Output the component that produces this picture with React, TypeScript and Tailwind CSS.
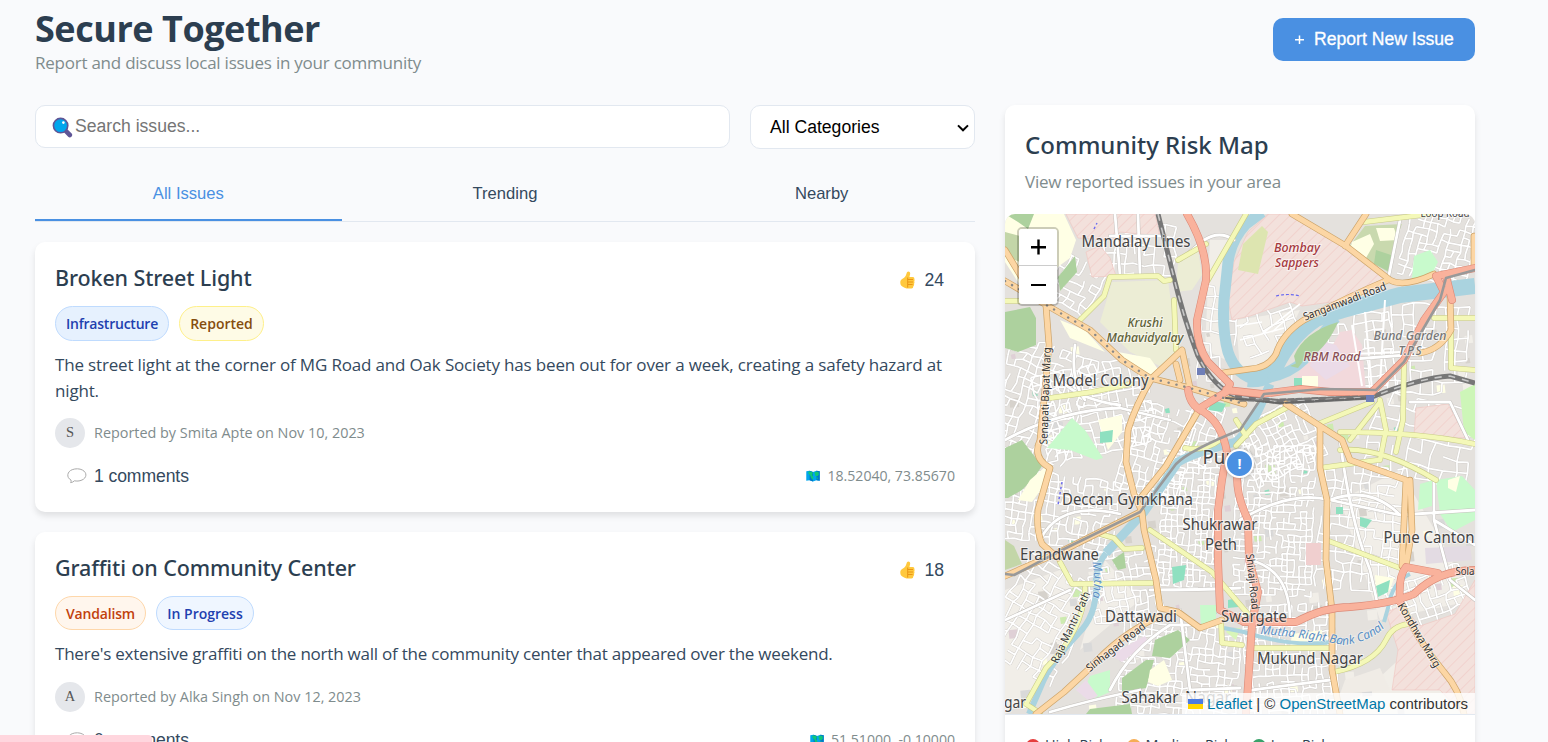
import type { ReactNode } from 'react';

type Badge = { label: string; className: string };
type Issue = {
  title: string;
  votes: number;
  badges: Badge[];
  text: string;
  textClass: string;
  initial: string;
  reporter: string;
  comments: number;
  coords: string;
};

const issues: Issue[] = [
  {
    title: 'Broken Street Light',
    votes: 24,
    badges: [
      { label: 'Infrastructure', className: 'h-[35px] w-[114px] tracking-[-0.22px] bg-[#e6f1fe] border-[#bfdbfe] text-[#1e40af]' },
      { label: 'Reported', className: 'h-[35px] w-[85px] bg-[#fefbe6] border-[#fef08a] text-[#854d0e]' },
    ],
    text: 'The street light at the corner of MG Road and Oak Society has been out for over a week, creating a safety hazard at night.',
    textClass: 'leading-[26px] tracking-[-0.168px]',
    initial: 'S',
    reporter: 'Reported by Smita Apte on Nov 10, 2023',
    comments: 1,
    coords: '18.52040, 73.85670',
  },
  {
    title: 'Graffiti on Community Center',
    votes: 18,
    badges: [
      { label: 'Vandalism', className: 'h-[34px] w-[91px] tracking-[-0.18px] bg-[#fff6ed] border-[#fed7aa] text-[#c2410c]' },
      { label: 'In Progress', className: 'h-[34px] w-[98px] bg-[#eff6ff] border-[#bfdbfe] text-[#1e40af]' },
    ],
    text: "There's extensive graffiti on the north wall of the community center that appeared over the weekend.",
    textClass: 'pb-[2px] leading-[24px] tracking-[-0.225px]',
    initial: 'A',
    reporter: 'Reported by Alka Singh on Nov 12, 2023',
    comments: 0,
    coords: '51.51000, -0.10000',
  },
];

function SearchIcon() {
  return (
    <svg width="21" height="21" viewBox="0 0 21 21" className="shrink-0">
      <path d="M14 14.2 L17.8 18" stroke="#5f5596" strokeWidth="4.6" strokeLinecap="round" />
      <circle cx="8.6" cy="8.6" r="7.2" fill="#00a6ed" stroke="#5f5596" strokeWidth="1.6" />
      <circle cx="11.4" cy="5.6" r="1.3" fill="#fff" />
    </svg>
  );
}

function ThumbIcon() {
  return (
    <svg width="15" height="18" viewBox="0 0 15 18">
      <path d="M7 1.2 C8-.2 10.3.4 10.2 2.6 C10.1 4.2 9.4 5.2 9.6 6 L13 6 Q14.6 6.3 14.3 8 Q14.9 9 14.2 10.3 Q14.8 11.6 14 12.8 Q14.5 14.5 13.3 15.2 Q13.4 17.2 11.5 17.4 Q7 17.9 4.6 16.7 Q.3 15.4.3 11.8 C.3 8.2 2.3 8.3 4.6 6.2 C6.3 4.6 6.4 2.4 7 1.2Z" fill="#ffc83d" />
      <path d="M7.7 6.5V16.6M8 8.5H13M8 11H13M8 13.5H12.6" stroke="#e9900f" strokeWidth="0.9" fill="none" />
    </svg>
  );
}

function BubbleIcon() {
  return (
    <svg width="20" height="16" viewBox="0 0 20 16">
      <path d="M4 12 C-1 9.5.2 3.4 5.2 1.7 C8.4.4 12.6.5 15.4 2 C20.4 4.6 19.8 10 15 12 C12.2 13.3 9.6 13.2 7.4 12.8 Q6 14.4 3.6 14.6 Q4.4 13.4 4 12Z" fill="#fff" stroke="#aaa" strokeWidth="1" />
    </svg>
  );
}

function MapIcon() {
  return (
    <svg width="14" height="12" viewBox="0 0 15 12">
      <path d="M.3 1 L3.8.4 7.5 1.6 11.2.4 14.7 1 V11 L11.2 10.6 7.5 11.8 3.8 10.6.3 11Z" fill="#00a6ed" />
      <path d="M3.8.4 7.5 1.6V11.8L3.8 10.6ZM11.2.4 14.7 1V11L11.2 10.6Z" fill="#0078c8" />
      <path d="M2.6 1.2 Q6 .8 7.5 2.4 L6.6 5 8 7.4 7.2 10.4 5.4 8 4.4 5.2 2.6 3.6Z M9 1.8 L13.4 1.4 13.8 4.6 12 6.4 9.8 5.6Z M11 8 L13 7.6 12.6 9.4Z" fill="#10c878" />
    </svg>
  );
}

function IssueCard({ issue }: { issue: Issue }) {
  return (
    <article className="rounded-[10px] bg-white p-5 shadow-[0_4px_6px_rgba(0,0,0,0.1)]">
      <div className="flex h-8 items-center justify-between">
        <h3 className="font-['Noto_Sans',sans-serif] text-[21.5px] leading-8 font-medium tracking-[-0.12px] text-[#2c3e50]">{issue.title}</h3>
        <button className="mt-1 flex items-center gap-[9px] pr-[11px] font-['Liberation_Sans',sans-serif] text-[17.6px] text-[#34495e]">
          <ThumbIcon />
          {issue.votes}
        </button>
      </div>
      <div className="mt-3 flex h-[35px] items-start gap-[10px]">
        {issue.badges.map((b) => (
          <span key={b.label} className={`flex items-center justify-center rounded-full border text-[14px] font-semibold ${b.className}`}>
            {b.label}
          </span>
        ))}
      </div>
      <p className={`mt-[11px] text-[17px] text-[#34495e] ${issue.textClass}`}>{issue.text}</p>
      <div className="mt-[14px] flex h-[30px] items-center gap-[9px]">
        <span className="flex size-[30px] items-center justify-center rounded-full bg-[#e5e7eb] font-['Liberation_Serif',serif] text-[14.5px] text-[#555]">
          {issue.initial}
        </span>
        <span className="text-[14.4px] text-[#7f8c8d]">{issue.reporter}</span>
      </div>
      <div className="mt-3 flex h-8 items-center justify-between">
        <button className="flex items-center gap-[7px] pl-3 font-['Liberation_Sans',sans-serif] text-[17.6px] tracking-[-0.1px] text-[#34495e]">
          <BubbleIcon />
          {issue.comments} comments
        </button>
        <span className="flex items-center gap-[7px] text-[14.1px] text-[#7f8c8d]">
          <MapIcon />
          {issue.coords}
        </span>
      </div>
    </article>
  );
}

/* ---------- map ---------- */

function seeded(seed: number) {
  let s = seed;
  return () => {
    s = (s * 16807) % 2147483647;
    return s / 2147483647;
  };
}

/* Irregular street grid inside a rotated rectangle. */
function streetGrid(cx: number, cy: number, w: number, h: number, deg: number, step: number, seed: number) {
  const r = seeded(seed * 7919 + 17);
  const a = (deg * Math.PI) / 180;
  const cols = Math.round(w / step);
  const rows = Math.round(h / step);
  const pts: string[][] = [];
  for (let i = 0; i <= cols; i++) {
    pts.push([]);
    for (let j = 0; j <= rows; j++) {
      const x = -w / 2 + i * step + (r() - 0.5) * step * 0.35;
      const y = -h / 2 + j * step + (r() - 0.5) * step * 0.35;
      pts[i].push(`${(cx + x * Math.cos(a) - y * Math.sin(a)).toFixed(1)} ${(cy + x * Math.sin(a) + y * Math.cos(a)).toFixed(1)}`);
    }
  }
  let d = '';
  for (let i = 0; i <= cols; i++) {
    for (let j = 0; j <= rows; j++) {
      if (i < cols && r() < 0.7) d += `M${pts[i][j]}L${pts[i + 1][j]}`;
      if (j < rows && r() < 0.74) d += `M${pts[i][j]}L${pts[i][j + 1]}`;
    }
  }
  return d;
}

const streets = [
  streetGrid(1040, 400, 90, 110, 20, 8, 1),
  streetGrid(1095, 410, 110, 90, -12, 8, 2),
  streetGrid(1140, 250, 70, 50, 2, 10, 3),
  streetGrid(1075, 285, 50, 50, 30, 8, 4),
  streetGrid(1155, 450, 60, 90, 15, 7, 5),
  streetGrid(1060, 510, 110, 70, 8, 7, 6),
  streetGrid(1040, 620, 80, 110, 30, 9, 7),
  streetGrid(1125, 585, 70, 70, -8, 7, 8),
  streetGrid(1190, 520, 60, 130, 3, 6, 9),
  streetGrid(1275, 520, 80, 150, 2, 6, 10),
  streetGrid(1180, 670, 120, 90, 5, 7, 11),
  streetGrid(1290, 660, 90, 110, -3, 7, 12),
  streetGrid(1360, 530, 80, 130, 6, 9, 13),
  streetGrid(1430, 600, 80, 50, -20, 8, 14),
  streetGrid(1280, 440, 80, 60, -25, 7, 15),
  streetGrid(1360, 350, 60, 90, -5, 9, 16),
  streetGrid(1440, 245, 70, 80, 15, 7, 17),
  streetGrid(1430, 350, 80, 90, 3, 11, 18),
  streetGrid(1420, 440, 100, 80, 12, 13, 19),
  streetGrid(1270, 325, 60, 40, -20, 11, 20),
  streetGrid(1215, 330, 30, 90, 5, 12, 21),
  streetGrid(1200, 430, 30, 60, 20, 8, 22),
].join('');

/* Small parks, plots and building blocks scattered between the streets. */
const plots = (() => {
  const r = seeded(4242);
  const fills = ['#ffffe5', '#d6d2cc', '#f1eee8', '#d9d9d9', '#cdebb0', '#f1eee8', '#8fe0c0', '#d6d2cc', '#ffffe5', '#dfd0d6'];
  return Array.from({ length: 190 }, (_, i) => {
    const x = 1005 + r() * 465;
    const y = 330 + r() * 380;
    const s = 3 + r() * 7;
    const big = i % 10 === 6 ? 0.6 : 1;
    return {
      fill: fills[i % 10],
      points: `${x},${y} ${x + s * big},${y - 1} ${x + s * big + 1},${y + s * 0.9 * big} ${x + 1},${y + s * big}`,
    };
  });
})();

type Area = [string, string];
const areas: Area[] = [
  ['#ffffe5', '1005,214 1064,214 1076,240 1070,258 1040,280 1020,285 1005,262'],
  ['#add19e', '1005,214 1034,214 1028,229 1018,222'],
  ['#c3d6a8', '1005,232 1020,236 1020,262 1005,256'],
  ['#add19e', '1058,277 1075,256 1077,272 1060,291'],
  ['#add19e', '1005,312 1030,307 1036,318 1036,345 1018,352 1005,348'],
  ['#f3e1dc', '1066,214 1155,214 1160,236 1120,232 1112,240 1078,238'],
  ['#f3e1dc', '1086,252 1100,246 1110,258 1116,276 1092,277'],
  ['#ecedd5', '1112,282 1168,280 1176,340 1183,350 1160,366 1130,352 1100,322'],
  ['#ffffe5', '1060,320 1085,330 1105,352 1070,338'],
  ['#ffffe5', '1118,352 1150,358 1160,372 1148,376 1126,360'],
  ['#ecedd5', '1178,262 1198,250 1202,275 1192,290 1176,292'],
  ['#c8facc', '1047,448 1072,418 1085,430 1103,458 1096,460 1070,450'],
  ['#ffffe5', '1098,420 1122,415 1122,432 1108,450'],
  ['#add19e', '1005,448 1022,440 1042,466 1034,478 1022,490 1008,498 1005,498'],
  ['#ffffe5', '1030,480 1046,466 1048,480 1032,502 1018,500'],
  ['#c3d6a8', '1005,540 1014,546 1022,564 1005,570'],
  ['#add19e', '1112,560 1124,552 1126,568 1118,570'],
  ['#add19e', '1155,640 1178,630 1190,640 1170,658 1152,656'],
  ['#add19e', '1122,678 1146,660 1154,660 1146,688 1122,692'],
  ['#ffffe5', '1150,670 1164,660 1172,680 1158,686 1148,682'],
  ['#c8facc', '1090,676 1110,670 1110,692 1096,698 1086,686'],
  ['#add19e', '1090,709 1130,704 1132,714 1086,714'],
  ['#ebdbe8', '1110,655 1145,636 1148,642 1122,662'],
  ['#ebdbe8', '1076,690 1086,680 1098,696 1088,700'],
  ['#c8facc', '1200,605 1216,605 1216,625 1201,630'],
  ['#8fe0c0', '1172,567 1186,565 1184,580 1173,584'],
  ['#8fe0c0', '1100,432 1113,430 1112,442 1100,443'],
  ['#8fe0c0', '1228,600 1238,598 1238,607 1228,608'],
  ['#8fe0c0', '1212,400 1226,404 1222,412 1208,410'],
  ['#8fe0c0', '1360,517 1372,520 1366,528 1360,526'],
  ['#f3e1dc', '1268,214 1296,214 1346,246 1386,281 1346,300 1302,306 1290,302 1250,316 1232,320 1228,300 1234,262 1248,232'],
  ['#dde5b0', '1243,244 1262,226 1268,232 1258,274 1238,270'],
  ['#c9d9ae', '1365,226 1402,224 1396,240 1388,272 1348,248'],
  ['#ffffe5', '1352,242 1370,234 1374,244 1366,258 1350,250'],
  ['#ffffe5', '1376,228 1394,228 1398,240 1380,241'],
  ['#add19e', '1376,250 1394,256 1390,272 1374,264'],
  ['#c8facc', '1414,256 1430,250 1438,262 1430,278 1412,278'],
  ['#f2d9dc', '1340,332 1352,330 1362,345 1366,392 1290,392 1304,362 1330,350'],
  ['#ebdbe8', '1318,340 1336,345 1350,366 1326,380 1310,366'],
  ['#ffffe5', '1302,376 1318,376 1318,388 1302,386'],
  ['#8fe0c0', '1294,378 1302,378 1302,386 1294,386'],
  ['#f3e1dc', '1416,408 1448,404 1466,438 1414,436'],
  ['#cdf6b8', '1460,392 1475,384 1475,440 1464,432'],
  ['#c8facc', '1420,484 1434,480 1432,506 1418,510'],
  ['#c8facc', '1436,480 1462,476 1475,490 1475,520 1452,532 1440,514'],
  ['#ffffe5', '1448,480 1460,476 1456,492 1448,488'],
  ['#f0cfcf', '1306,543 1321,543 1321,565 1306,565'],
  ['#e3dbe3', '1425,548 1470,546 1472,560 1426,564'],
  ['#ffffe5', '1375,575 1394,578 1390,590 1376,598'],
  ['#8fe0c0', '1376,586 1390,580 1388,592 1378,597'],
  ['#8fe0c0', '1336,507 1343,507 1343,514 1336,514'],
  ['#f3e1dc', '1386,612 1402,606 1420,626 1455,614 1475,580 1475,714 1462,714 1440,690 1392,690 1398,650'],
  ['#ffffe5', '1292,634 1322,630 1322,648 1290,648'],
  ['#d8f5b8', '1240,628 1236,640 1226,632 1230,628'],
  ['#f0ece6', '1345,680 1380,668 1390,690 1340,694'],
];

const water: [number, string][] = [
  [11, 'M1262 212 L1246 224 Q1231 240 1228 262 L1224 300 Q1222 330 1228 352 Q1236 376 1258 380'],
  [16, 'M1248 379 Q1266 381 1275 368 Q1290 336 1316 319 Q1340 310 1370 303 L1400 295 L1475 286'],
  [10, 'M1268 378 Q1290 374 1304 360 Q1314 342 1336 318'],
  [9, 'M1270 384 L1262 402 Q1250 430 1236 442 Q1196 452 1178 462 L1144 512 L1106 553'],
  [6, 'M1106 553 Q1094 568 1096 588 Q1096 616 1078 634 Q1050 664 1042 684 L1029 714'],
  [4, 'M1410 574 Q1392 582 1388 608 L1384 622'],
  [4, 'M1224 628 L1244 632 Q1300 650 1340 640'],
];

const minorMain = [
  'M1040 540 Q1060 500 1120 514', 'M1005 620 L1070 590', 'M1005 440 Q1060 410 1120 408 L1170 420',
  'M1240 520 Q1290 490 1330 500 L1400 515 L1475 510', 'M1340 440 Q1350 520 1370 570 L1378 606', 'M1330 500 Q1370 485 1400 515',
  'M1250 560 Q1290 570 1290 620', 'M1180 610 L1190 690 L1240 688', 'M1150 590 Q1200 590 1240 588', 'M1252 690 L1330 680',
  'M1400 220 Q1394 250 1388 280', 'M1410 402 L1450 402 L1468 440', 'M1434 480 L1434 520 L1475 545', 'M1434 520 L1450 580 L1475 600',
  'M1340 360 L1420 354', 'M1180 260 L1204 240 Q1220 230 1234 240', 'M1140 690 Q1090 700 1050 712', 'M1110 690 Q1130 650 1170 625 L1200 625',
  'M1115 214 L1120 275', 'M1138 214 L1140 275', 'M1110 236 L1165 236', 'M1060 380 Q1080 400 1120 405', 'M1075 345 Q1070 380 1085 400',
].join('');

const yellow = [
  'M1005 301 L1045 301', 'M1078 322 L1104 296 L1110 277 L1158 276 L1164 281 L1170 280', 'M1178 260 L1206 244', 'M1208 280 L1246 214',
  'M1174 300 L1176 350', 'M1050 398 L1092 392 L1130 384', 'M1150 530 L1212 572 L1248 614', 'M1060 562 L1072 584 L1152 583', 'M1085 588 Q1084 630 1046 668 L1026 704',
  'M1026 704 L1040 713', 'M1250 648 L1332 648', 'M1221 620 L1222 643 L1242 645', 'M1326 540 L1400 568', 'M1236 446 L1256 424 L1286 408', 'M1318 424 L1372 402',
  'M1320 468 L1378 460', 'M1340 432 Q1420 432 1475 444', 'M1404 360 L1403 420 L1396 452', 'M1380 400 L1386 430 L1380 460', 'M1340 450 Q1380 446 1436 480',
  'M1364 222 L1430 214', 'M1434 318 L1475 318', 'M1451 322 L1451 368 L1475 370', 'M1334 672 Q1374 664 1386 640 Q1392 626 1408 624', 'M1185 448 Q1204 452 1220 440', 'M1100 534 L1114 538 L1124 549 L1142 548',
  'M1236 420 L1246 436', 'M1380 402 L1350 440',
].join('');

const orange = [
  'M1005 250 L1022 278', 'M1005 281 L1048 306 L1090 330 L1122 360 L1150 378 L1190 388 L1244 404', 'M1046 306 L1049 345 L1044 400 L1040 440 Q1032 458 1050 468 L1038 510 Q1036 530 1042 544 L1058 558',
  'M1182 350 L1152 378 Q1136 404 1128 430 L1126 462 L1134 494 L1142 512 L1144 530 L1156 580 L1160 608 L1178 612 L1200 628 L1222 620', 'M1182 350 L1190 388', 'M1200 408 L1166 466 L1142 496',
  'M1292 214 L1346 246 L1390 280 Q1404 288 1434 274', 'M1388 280 Q1350 296 1304 320 Q1282 334 1276 354 Q1268 368 1250 369 L1222 373', 'M1345 246 L1366 214', 'M1286 404 L1320 426 L1320 468 L1327 500 L1326 560 L1332 610 L1332 670 L1340 714',
  'M1320 426 L1342 440 L1350 460 L1406 480 L1402 566', 'M1410 480 L1412 530 L1406 566', 'M1402 604 Q1414 636 1444 672 Q1460 690 1464 714', 'M1160 616 Q1120 634 1090 668 L1064 692 L1036 714',
  'M1450 296 L1451 330 Q1440 350 1420 353', 'M1474 236 L1474 268', 'M1005 576 L1060 552 L1140 512', 'M1176 364 L1180 380',
].join('');

const red = [
  'M1187 214 Q1208 250 1206 280 L1197 320 Q1196 345 1208 362 L1230 384 L1226 392 L1200 408', 'M1188 390 Q1190 406 1204 412 Q1222 424 1227 452 L1222 480 L1218 510 L1218 560 L1220 610 L1244 622',
  'M1226 390 L1262 394 L1300 389 L1330 392 L1372 392 L1404 360 L1424 320 L1444 292 L1436 276 L1475 268', 'M1452 300 L1446 276', 'M1238 470 Q1234 490 1248 520 L1249 560 L1258 592 L1252 624 L1249 670 L1246 714',
  'M1244 622 L1296 622 Q1324 607 1350 607 Q1390 604 1414 594 Q1438 570 1475 570', 'M1438 573 L1406 567 Q1398 576 1400 602',
].join('');

const metro = 'M1475 270 L1446 278 L1440 300 L1404 362 L1376 390 L1322 389 L1264 394 L1240 430 Q1190 450 1176 464 L1140 512 L1060 551 L1014 575 L1005 574';
const rail = 'M1158 214 L1172 270 Q1184 320 1198 356 Q1214 388 1236 396 L1280 402 L1372 397 Q1420 378 1450 376 L1475 383';

function Label({ x, y, w, size = 15.5, fill = '#444', italic, rotate, children }: { x: number; y: number; w: number; size?: number; fill?: string; italic?: boolean; rotate?: number; children: string }) {
  return (
    <text
      x={x}
      y={y}
      textAnchor="middle"
      textLength={w}
      lengthAdjust="spacingAndGlyphs"
      fontSize={size}
      fill={fill}
      fontStyle={italic ? 'italic' : 'normal'}
      fontWeight={italic ? 500 : 400}
      stroke="#fff"
      strokeOpacity="0.55"
      strokeWidth="2"
      paintOrder="stroke"
      transform={rotate ? `rotate(${rotate} ${x} ${y})` : undefined}
    >
      {children}
    </text>
  );
}

function RiskMap() {
  return (
    <svg width="470" height="500" viewBox="1005 214 470 500" className="block rounded-t-[10px]" fontFamily="'Noto Sans', sans-serif" fill="none">
      <defs>
        <pattern id="hatch" width="8" height="8" patternUnits="userSpaceOnUse" patternTransform="rotate(45)">
          <path d="M0 0V8" stroke="#f0c4c0" strokeWidth="1" />
        </pattern>
        <path id="canal" d="M1260 634 Q1310 638 1344 645 Q1372 642 1388 624" />
        <path id="mutha" d="M1092 562 Q1096 580 1092 600" />
      </defs>
      <rect x="1005" y="214" width="470" height="500" fill="#e4e1dd" />
      <path d="M1340 500 L1400 470 L1475 600 L1380 620Z M1210 240 L1230 240 L1226 360 L1205 350Z M1005 590 L1060 570 L1090 600 L1040 690 L1005 714Z M1236 320 L1300 310 L1276 360 L1240 370Z M1420 640 L1340 714 H1475Z M1105 560 L1140 600 L1080 650Z" fill="#f1eee8" />
      {plots.map((p) => (
        <polygon key={p.points} points={p.points} fill={p.fill} />
      ))}
      <path d={streets} stroke="#cfccc8" strokeWidth="2.5" />
      <path d={streets} stroke="#fff" strokeWidth="1.7" />
      {areas.map(([fill, points]) => (
        <g key={points}>
          <polygon points={points} fill={fill} />
          {fill === '#f3e1dc' && <polygon points={points} fill="url(#hatch)" stroke="#f0c4c0" strokeWidth="0.6" />}
        </g>
      ))}
      {water.map(([w, d]) => (
        <path key={d} d={d} stroke="#aad3df" strokeWidth={w} strokeLinejoin="round" />
      ))}
      <path d="M1294 356 Q1304 332 1338 322 Q1328 346 1310 358 L1296 364Z" fill="#add19e" />
      <path d="M1290 366 L1304 360 L1298 368Z" fill="#add19e" />
      <path d="M1276 296 Q1288 293 1300 296" stroke="#6a6af0" strokeWidth="1.2" strokeDasharray="3 2" />
      <path d="M1094 229 L1097 223 M1062 482 L1058 505" stroke="#6a6af0" strokeWidth="1.4" strokeDasharray="2.5 2.5" />
      <path d="M1385 300 L1380 385 M1365 312 L1372 390 M1352 325 L1362 386 M1350 354 L1400 352" stroke="#fff" strokeWidth="2" />
      <path d="M1236 326 L1262 322 M1240 340 L1284 328 M1262 334 L1300 304 M1272 332 L1292 314" stroke="#fff" strokeWidth="1.6" />
      <g strokeLinecap="round" strokeLinejoin="round">
        <path d={minorMain} stroke="#c4c1bd" strokeWidth="3.8" />
        <path d={minorMain} stroke="#fff" strokeWidth="2.8" />
        <path d={rail} stroke="#777" strokeWidth="5" strokeLinecap="butt" />
        <path d={rail} stroke="#c8c8c8" strokeWidth="1.6" strokeDasharray="7 7" strokeLinecap="butt" />
        <path d={yellow} stroke="#c9cc88" strokeWidth="5.6" />
        <path d={yellow} stroke="#f4f8b8" strokeWidth="4.4" />
        <path d={orange} stroke="#cda46a" strokeWidth="6.6" />
        <path d={orange} stroke="#fcd6a4" strokeWidth="5.2" />
        <path d={red} stroke="#dc8a78" strokeWidth="7.8" />
        <path d={red} stroke="#f9b29c" strokeWidth="6.6" />
        <path d={metro} stroke="#999" strokeWidth="2.6" />
        <path d="M1005 281 L1048 306 L1090 330 L1122 360 L1150 378 L1190 388 L1244 404" stroke="#888" strokeWidth="2.4" strokeDasharray="0.1 8" />
        <path d="M1226 398 L1280 403 L1372 398" stroke="#666" strokeWidth="2" strokeDasharray="8 2" />
        <path d="M1240 401 L1290 399 L1366 396" stroke="#777" strokeWidth="1.6" strokeDasharray="6 2" />
      </g>
      <path d="M1197 368h8v7h-8zM1366 395h8v7h-8z" fill="#6f7fb8" />

      <Label x={1136} y={247} w={109}>Mandalay Lines</Label>
      <Label x={1145} y={327} w={35} size={12} fill="#5f6238" italic>Krushi</Label>
      <Label x={1145} y={342} w={77} size={12} fill="#5f6238" italic>Mahavidyalay</Label>
      <Label x={1100.5} y={385.5} w={96}>Model Colony</Label>
      <Label x={1297} y={252} w={46} size={12} fill="#a5393e" italic>Bombay</Label>
      <Label x={1297} y={267} w={44} size={12} fill="#a5393e" italic>Sappers</Label>
      <Label x={1332} y={361} w={57} size={12} fill="#8a4f55" italic>RBM Road</Label>
      <Label x={1410} y={340} w={73} size={12} fill="#777" italic>Bund Garden</Label>
      <Label x={1410} y={355} w={23} size={12} fill="#777" italic>T.P.S</Label>
      <Label x={1445} y={217} w={49} size={11}>Loop Road</Label>
      <Label x={1346} y={305} w={88} size={11} fill="#333" rotate={-21}>Sangamwadi Road</Label>
      <Label x={1049} y={396} w={97} size={11} fill="#333" rotate={-88}>Senapati Bapat Marg</Label>
      <Label x={1127.5} y={505} w={131}>Deccan Gymkhana</Label>
      <Label x={1220} y={530} w={75}>Shukrawar</Label>
      <Label x={1221} y={549.5} w={32}>Peth</Label>
      <Label x={1059.5} y={560} w={79}>Erandwane</Label>
      <Label x={1141} y={622} w={72}>Dattawadi</Label>
      <Label x={1254} y={622} w={66}>Swargate</Label>
      <Label x={1310} y={664} w={106}>Mukund Nagar</Label>
      <Label x={1150} y={703} w={57}>Sahakar</Label>
      <Label x={1208} y={703} w={46}>Nagar</Label>
      <Label x={1429} y={543} w={91}>Pune Canton</Label>
      <Label x={1015} y={708} w={22}>gar</Label>
      <Label x={1225} y={463.5} w={45} size={19}>Pune</Label>
      <Label x={1074} y={629} w={78} size={11} fill="#333" rotate={-65}>Raja Mantri Path</Label>
      <Label x={1118} y={650} w={72} size={11} fill="#333" rotate={-38}>Sinhagad Road</Label>
      <Label x={1249} y={582} w={56} size={11} fill="#333" rotate={84}>Shivaji Road</Label>
      <Label x={1416} y={637} w={73} size={11} fill="#333" rotate={59}>Kondhwa Marg</Label>
      <Label x={1465} y={574.5} w={19} size={11} fill="#333">Sola</Label>
      <text fontSize="12" fontStyle="italic" fill="#5b8fc4" stroke="#fff" strokeOpacity="0.5" strokeWidth="1.5" paintOrder="stroke">
        <textPath href="#canal" textLength="130">Mutha Right Bank Canal</textPath>
      </text>
      <text fontSize="12" fontStyle="italic" fill="#5b8fc4" stroke="#fff" strokeOpacity="0.5" strokeWidth="1.5" paintOrder="stroke">
        <textPath href="#mutha" textLength="36">Mutha</textPath>
      </text>
    </svg>
  );
}

function LegendItem({ className, children }: { className: string; children: ReactNode }) {
  return (
    <span className="flex items-start gap-[5px]">
      <span className={`mt-[3px] size-[14px] rounded-full ${className}`} />
      <span className="leading-[18px]">{children}</span>
    </span>
  );
}

export default function App() {
  return (
    <div className="relative h-[742px] overflow-hidden bg-[#f9fafc] pl-[35px] font-['Open_Sans',sans-serif]">
      <div className="w-[1440px]">
        <header className="flex h-[105px] items-start justify-between">
          <div className="pt-[9px]">
            <h1 className="text-[36px] leading-10 font-bold tracking-[-0.46px] text-[#2c3e50]">Secure Together</h1>
            <p className="mt-px text-[17px] leading-[26px] tracking-[-0.24px] text-[#7f8c8d]">Report and discuss local issues in your community</p>
          </div>
          <button className="mt-[18px] flex h-[43px] w-[202px] items-center rounded-[10px] bg-[#4a90e2] pl-[21px] font-['Liberation_Sans',sans-serif] text-[17.6px] text-white [-webkit-text-stroke:0.3px_white]">
            <svg width="12" height="12" viewBox="0 0 12 12" className="mr-2">
              <path d="M5.5 1.5V10M1 5.8H10" stroke="#fff" strokeWidth="1.5" />
            </svg>
            Report New Issue
          </button>
        </header>

        <main className="flex items-start gap-[30px]">
          <section className="w-[940px]">
            <div className="flex items-start gap-5">
              <div className="flex h-[43px] w-[695px] items-center rounded-[10px] border border-[#e2e8f0] bg-white pl-4">
                <span className="pt-px"><SearchIcon /></span>
                <span className="ml-[2px] font-['Liberation_Sans',sans-serif] text-[17.6px] text-[#757575]">Search issues...</span>
              </div>
              <div className="flex h-[44px] w-[225px] items-center justify-between rounded-[10px] border border-[#e2e8f0] bg-white pr-[5px] pl-[19px] font-['Liberation_Sans',sans-serif] text-[17.6px] text-black">
                All Categories
                <svg width="12" height="8" viewBox="0 0 12 8" className="mt-px">
                  <path d="M1 1.4 L6 6.3 L11 1.4" fill="none" stroke="#000" strokeWidth="2" />
                </svg>
              </div>
            </div>

            <nav className="mt-[17px] flex h-[56px] gap-[10px] border-b border-[#e2e8f0] font-['Liberation_Sans',sans-serif] text-[16.6px] text-[#34495e]">
              <button className="h-[55px] flex-1 border-b-2 border-[#4a90e2] pt-1 text-[#4a90e2]">All Issues</button>
              <button className="h-[55px] flex-1 border-b-2 border-transparent pt-1">Trending</button>
              <button className="h-[55px] flex-1 border-b-2 border-transparent pt-1">Nearby</button>
            </nav>

            <div className="mt-5 flex flex-col gap-5">
              {issues.map((issue) => (
                <IssueCard key={issue.title} issue={issue} />
              ))}
            </div>
          </section>

          <aside className="w-[470px] rounded-[10px] bg-white shadow-[0_4px_6px_rgba(0,0,0,0.1)]">
            <div className="h-[109px] px-5 pt-6">
              <h2 className="font-['Noto_Sans',sans-serif] text-[24px] leading-8 font-medium text-[#2c3e50]">Community Risk Map</h2>
              <p className="mt-2 text-[17px] leading-[26px] tracking-[-0.25px] text-[#7f8c8d]">View reported issues in your area</p>
            </div>
            <div className="relative">
              <RiskMap />
              <div className="absolute top-[13px] left-3 w-[42px] overflow-hidden rounded-[5px] border-2 border-black/20 bg-clip-padding">
                <div className="flex h-[37px] items-center justify-center border-b border-[#ccc] bg-white">
                  <svg width="18" height="18" viewBox="0 0 18 18"><path d="M9.5 1.5V16.5M2 9.3H17" stroke="#000" strokeWidth="2.4" /></svg>
                </div>
                <div className="flex h-[38px] items-center justify-center bg-white">
                  <svg width="18" height="18" viewBox="0 0 18 18"><path d="M2 9H17" stroke="#000" strokeWidth="2" /></svg>
                </div>
              </div>
              <div className="absolute top-[235px] left-[220px] flex size-[29px] items-center justify-center rounded-full border-2 border-white bg-[#4a90e2] text-[14px] font-bold text-white shadow-[0_0_4px_rgba(0,0,0,0.3)]">!</div>
              <div className="absolute right-0 bottom-0 flex h-[21px] items-center bg-white/80 pt-px pr-[7px] pl-[6px] font-['Liberation_Sans',sans-serif] text-[15px] whitespace-pre text-[#333]">
                <svg width="15" height="10" viewBox="0 0 15 10" className="mr-[4px]">
                  <path d="M0 0H15V5H0Z" fill="#4c7be1" />
                  <path d="M0 5H15V10H0Z" fill="#ffd500" />
                </svg>
                <span className="text-[#0078a8]">Leaflet</span> | © <span className="text-[#0078a8]">OpenStreetMap</span> contributors
              </div>
            </div>
            <div className="flex h-[70px] items-start gap-5 border-t border-[#e2e8f0] px-[21px] pt-[21px] text-[14.4px] text-[#2c3e50]">
              <LegendItem className="bg-[#e53e3e]">High Risk</LegendItem>
              <LegendItem className="bg-[#f6ad55]">Medium Risk</LegendItem>
              <LegendItem className="bg-[#38a169]">Low Risk</LegendItem>
            </div>
          </aside>
        </main>
      </div>
      <div className="absolute bottom-0 left-0 h-[7px] w-[152px] rounded-tr-[4px] bg-[#ffd6de]" />
    </div>
  );
}
